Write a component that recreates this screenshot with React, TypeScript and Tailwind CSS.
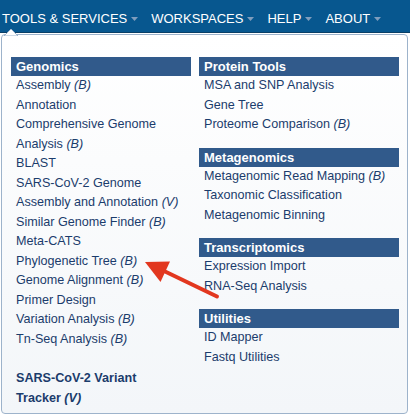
import React from "react";

type Item = { t: string; b?: string };

const Caret = () => (
  <svg width="7" height="4" viewBox="0 0 7 4" className="ml-[4px] mt-[2px]">
    <polygon points="0,0 7,0 3.5,4" fill="#7f9dbd" />
  </svg>
);

const NavItem = ({ label, first }: { label: string; first?: boolean }) => (
  <div className={`flex items-center ${first ? "" : "ml-[13px]"}`}>
    <span className="text-white text-[13px] leading-none">{label}</span>
    <Caret />
  </div>
);

const Link = ({ item }: { item: Item }) => (
  <div className="pl-[5px] text-[#1b3c6c]">
    {item.t.split("\n").map((line, i, arr) => (
      <React.Fragment key={i}>
        {line}
        {i === arr.length - 1 && item.b ? (
          <>
            {" "}
            <i>{item.b}</i>
          </>
        ) : null}
        {i < arr.length - 1 ? <br /> : null}
      </React.Fragment>
    ))}
  </div>
);

const Header = ({ title }: { title: string }) => (
  <div className="bg-[#315a8b] text-white font-bold pl-[5px] leading-[19px] text-[13px]">{title}</div>
);

const Group = ({ title, items, first }: { title: string; items: Item[]; first?: boolean }) => (
  <div className={first ? "" : "mt-[13px]"}>
    <Header title={title} />
    {items.map((it, i) => (
      <Link key={i} item={it} />
    ))}
  </div>
);

export default function App() {
  const genomics: Item[] = [
    { t: "Assembly", b: "(B)" },
    { t: "Annotation" },
    { t: "Comprehensive Genome\nAnalysis", b: "(B)" },
    { t: "BLAST" },
    { t: "SARS-CoV-2 Genome\nAssembly and Annotation", b: "(V)" },
    { t: "Similar Genome Finder", b: "(B)" },
    { t: "Meta-CATS" },
    { t: "Phylogenetic Tree", b: "(B)" },
    { t: "Genome Alignment", b: "(B)" },
    { t: "Primer Design" },
    { t: "Variation Analysis", b: "(B)" },
    { t: "Tn-Seq Analysis", b: "(B)" },
  ];

  return (
    <div
      className="relative w-[410px] h-[416px] bg-white overflow-hidden"
      style={{ fontFamily: '"Liberation Sans", Arial, Helvetica, sans-serif' }}
    >
      <div className="h-[33px] bg-[#07578f] border-b border-[#0a3f66] flex items-center pl-[2px] pt-[4px]">
        <NavItem label="TOOLS & SERVICES" first />
        <NavItem label="WORKSPACES" />
        <NavItem label="HELP" />
        <NavItem label="ABOUT" />
      </div>

      <div className="relative mt-[1px] ml-[1px] mr-[2px] h-[380px] border border-[#9db3cb] rounded-[4px] bg-gradient-to-b from-white to-[#f3f6f9] pt-[22px] pl-[9px] pr-[7px]">
        <div className="flex gap-[8px] text-[12.6px] leading-[19.5px]">
          <div className="w-[180px]">
            <Header title="Genomics" />
            {genomics.map((it, i) => (
              <Link key={i} item={it} />
            ))}
            <div className="mt-[20px] pl-[5px] font-bold text-[#1b3c6c]">
              SARS-CoV-2 Variant
              <br />
              Tracker <i>(V)</i>
            </div>
          </div>
          <div className="w-[200px]">
            <Group
              first
              title="Protein Tools"
              items={[{ t: "MSA and SNP Analysis" }, { t: "Gene Tree" }, { t: "Proteome Comparison", b: "(B)" }]}
            />
            <Group
              title="Metagenomics"
              items={[
                { t: "Metagenomic Read Mapping", b: "(B)" },
                { t: "Taxonomic Classification" },
                { t: "Metagenomic Binning" },
              ]}
            />
            <Group title="Transcriptomics" items={[{ t: "Expression Import" }, { t: "RNA-Seq Analysis" }]} />
            <Group title="Utilities" items={[{ t: "ID Mapper" }, { t: "Fastq Utilities" }]} />
          </div>
        </div>
      </div>

      {/* notch */}
      <svg className="absolute left-[4px] top-[28px]" width="14" height="9" viewBox="0 0 14 9">
        <polygon points="0,8 7,1 14,8" fill="#ffffff" stroke="#9db3cb" strokeWidth="1" />
        <rect x="0" y="8" width="14" height="1" fill="#ffffff" />
      </svg>

      {/* red arrow */}
      <svg className="absolute left-0 top-0 pointer-events-none" width="410" height="416">
        <line x1="163" y1="270.5" x2="217" y2="296.5" stroke="#e2371f" strokeWidth="4" strokeLinecap="round" />
        <polygon points="145,262 170,261.5 160.5,282" fill="#e2371f" />
      </svg>
    </div>
  );
}
